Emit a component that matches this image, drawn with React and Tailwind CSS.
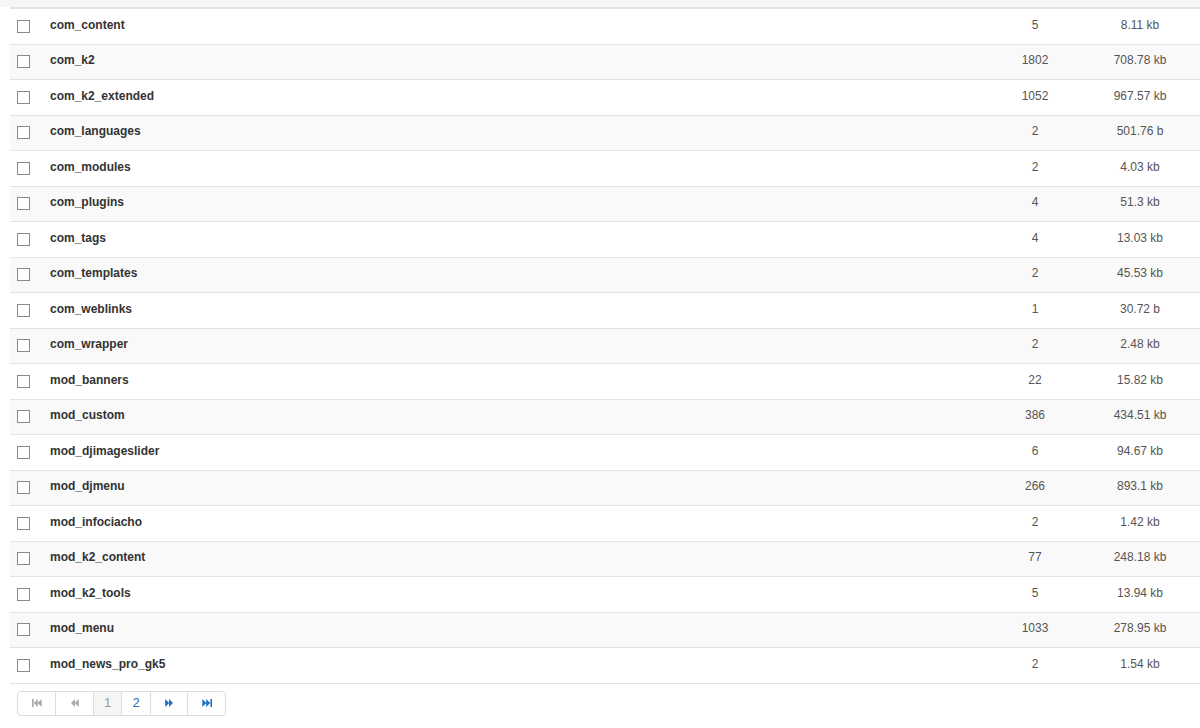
import React from "react";

const rows = [
  ["com_content", "5", "8.11 kb"],
  ["com_k2", "1802", "708.78 kb"],
  ["com_k2_extended", "1052", "967.57 kb"],
  ["com_languages", "2", "501.76 b"],
  ["com_modules", "2", "4.03 kb"],
  ["com_plugins", "4", "51.3 kb"],
  ["com_tags", "4", "13.03 kb"],
  ["com_templates", "2", "45.53 kb"],
  ["com_weblinks", "1", "30.72 b"],
  ["com_wrapper", "2", "2.48 kb"],
  ["mod_banners", "22", "15.82 kb"],
  ["mod_custom", "386", "434.51 kb"],
  ["mod_djimageslider", "6", "94.67 kb"],
  ["mod_djmenu", "266", "893.1 kb"],
  ["mod_infociacho", "2", "1.42 kb"],
  ["mod_k2_content", "77", "248.18 kb"],
  ["mod_k2_tools", "5", "13.94 kb"],
  ["mod_menu", "1033", "278.95 kb"],
  ["mod_news_pro_gk5", "2", "1.54 kb"],
];

function Tri({ dir, color, bar }) {
  const c = color;
  if (dir === "left") {
    return (
      <svg width="10" height="8" viewBox="0 0 10 8">
        {bar && <rect x="0" y="0" width="1.6" height="8" fill={c} />}
        <polygon points={bar ? "1.8,4 5.8,0 5.8,8" : "1,4 5,0 5,8"} fill={c} />
        <polygon points={bar ? "5.6,4 9.6,0 9.6,8" : "4.8,4 8.8,0 8.8,8"} fill={c} />
      </svg>
    );
  }
  return (
    <svg width="10" height="8" viewBox="0 0 10 8">
      <polygon points={bar ? "0.4,0 4.4,4 0.4,8" : "1.2,0 5.2,4 1.2,8"} fill={c} />
      <polygon points={bar ? "4.2,0 8.2,4 4.2,8" : "5,0 9,4 5,8"} fill={c} />
      {bar && <rect x="8.4" y="0" width="1.6" height="8" fill={c} />}
    </svg>
  );
}

export default function App() {
  return (
    <div
      className="w-[1200px] h-[728px] bg-white overflow-hidden text-[12px] text-[#333]"
      style={{ fontFamily: '"Liberation Sans", Arial, sans-serif' }}
    >
      <div className="h-[7px] bg-[#f6f6f6]" />
      <div className="ml-[10px] border-t-2 border-[#e3e3e3]">
        {rows.map(([name, count, size], i) => (
          <div
            key={name}
            className={`grid grid-cols-[30px_1fr_90px_120px] items-center h-[35.5px] border-b border-[#e3e3e3] ${
              i % 2 === 1 ? "bg-[#f9f9f9]" : "bg-white"
            }`}
          >
            <div className="pl-[7px] flex items-center">
              <span className="block w-[13px] h-[13px] border border-[#8a8a8a] bg-white" />
            </div>
            <div className="pl-[10px] pb-[3px] font-bold text-[#333]">{name}</div>
            <div className="pb-[3px] text-center text-[#555]">{count}</div>
            <div className="pb-[3px] text-center text-[#555]">{size}</div>
          </div>
        ))}
      </div>
      <div className="mt-[7px] ml-[17px] inline-flex h-[25px] border border-[#dddddd] rounded-[4px] overflow-hidden">
        <div className="w-[38px] flex items-center justify-center border-r border-[#dddddd]">
          <Tri dir="left" color="#a8a8a8" bar />
        </div>
        <div className="w-[38px] flex items-center justify-center border-r border-[#dddddd]">
          <Tri dir="left" color="#a8a8a8" />
        </div>
        <div className="w-[28px] flex items-center justify-center border-r border-[#dddddd] bg-[#f5f5f5] text-[#999] text-[13px]">
          1
        </div>
        <div className="w-[29px] flex items-center justify-center border-r border-[#dddddd] text-[#2a6fb5] text-[13px]">
          2
        </div>
        <div className="w-[37px] flex items-center justify-center border-r border-[#dddddd]">
          <Tri dir="right" color="#1f6fc5" />
        </div>
        <div className="w-[37px] flex items-center justify-center">
          <Tri dir="right" color="#1f6fc5" bar />
        </div>
      </div>
    </div>
  );
}
